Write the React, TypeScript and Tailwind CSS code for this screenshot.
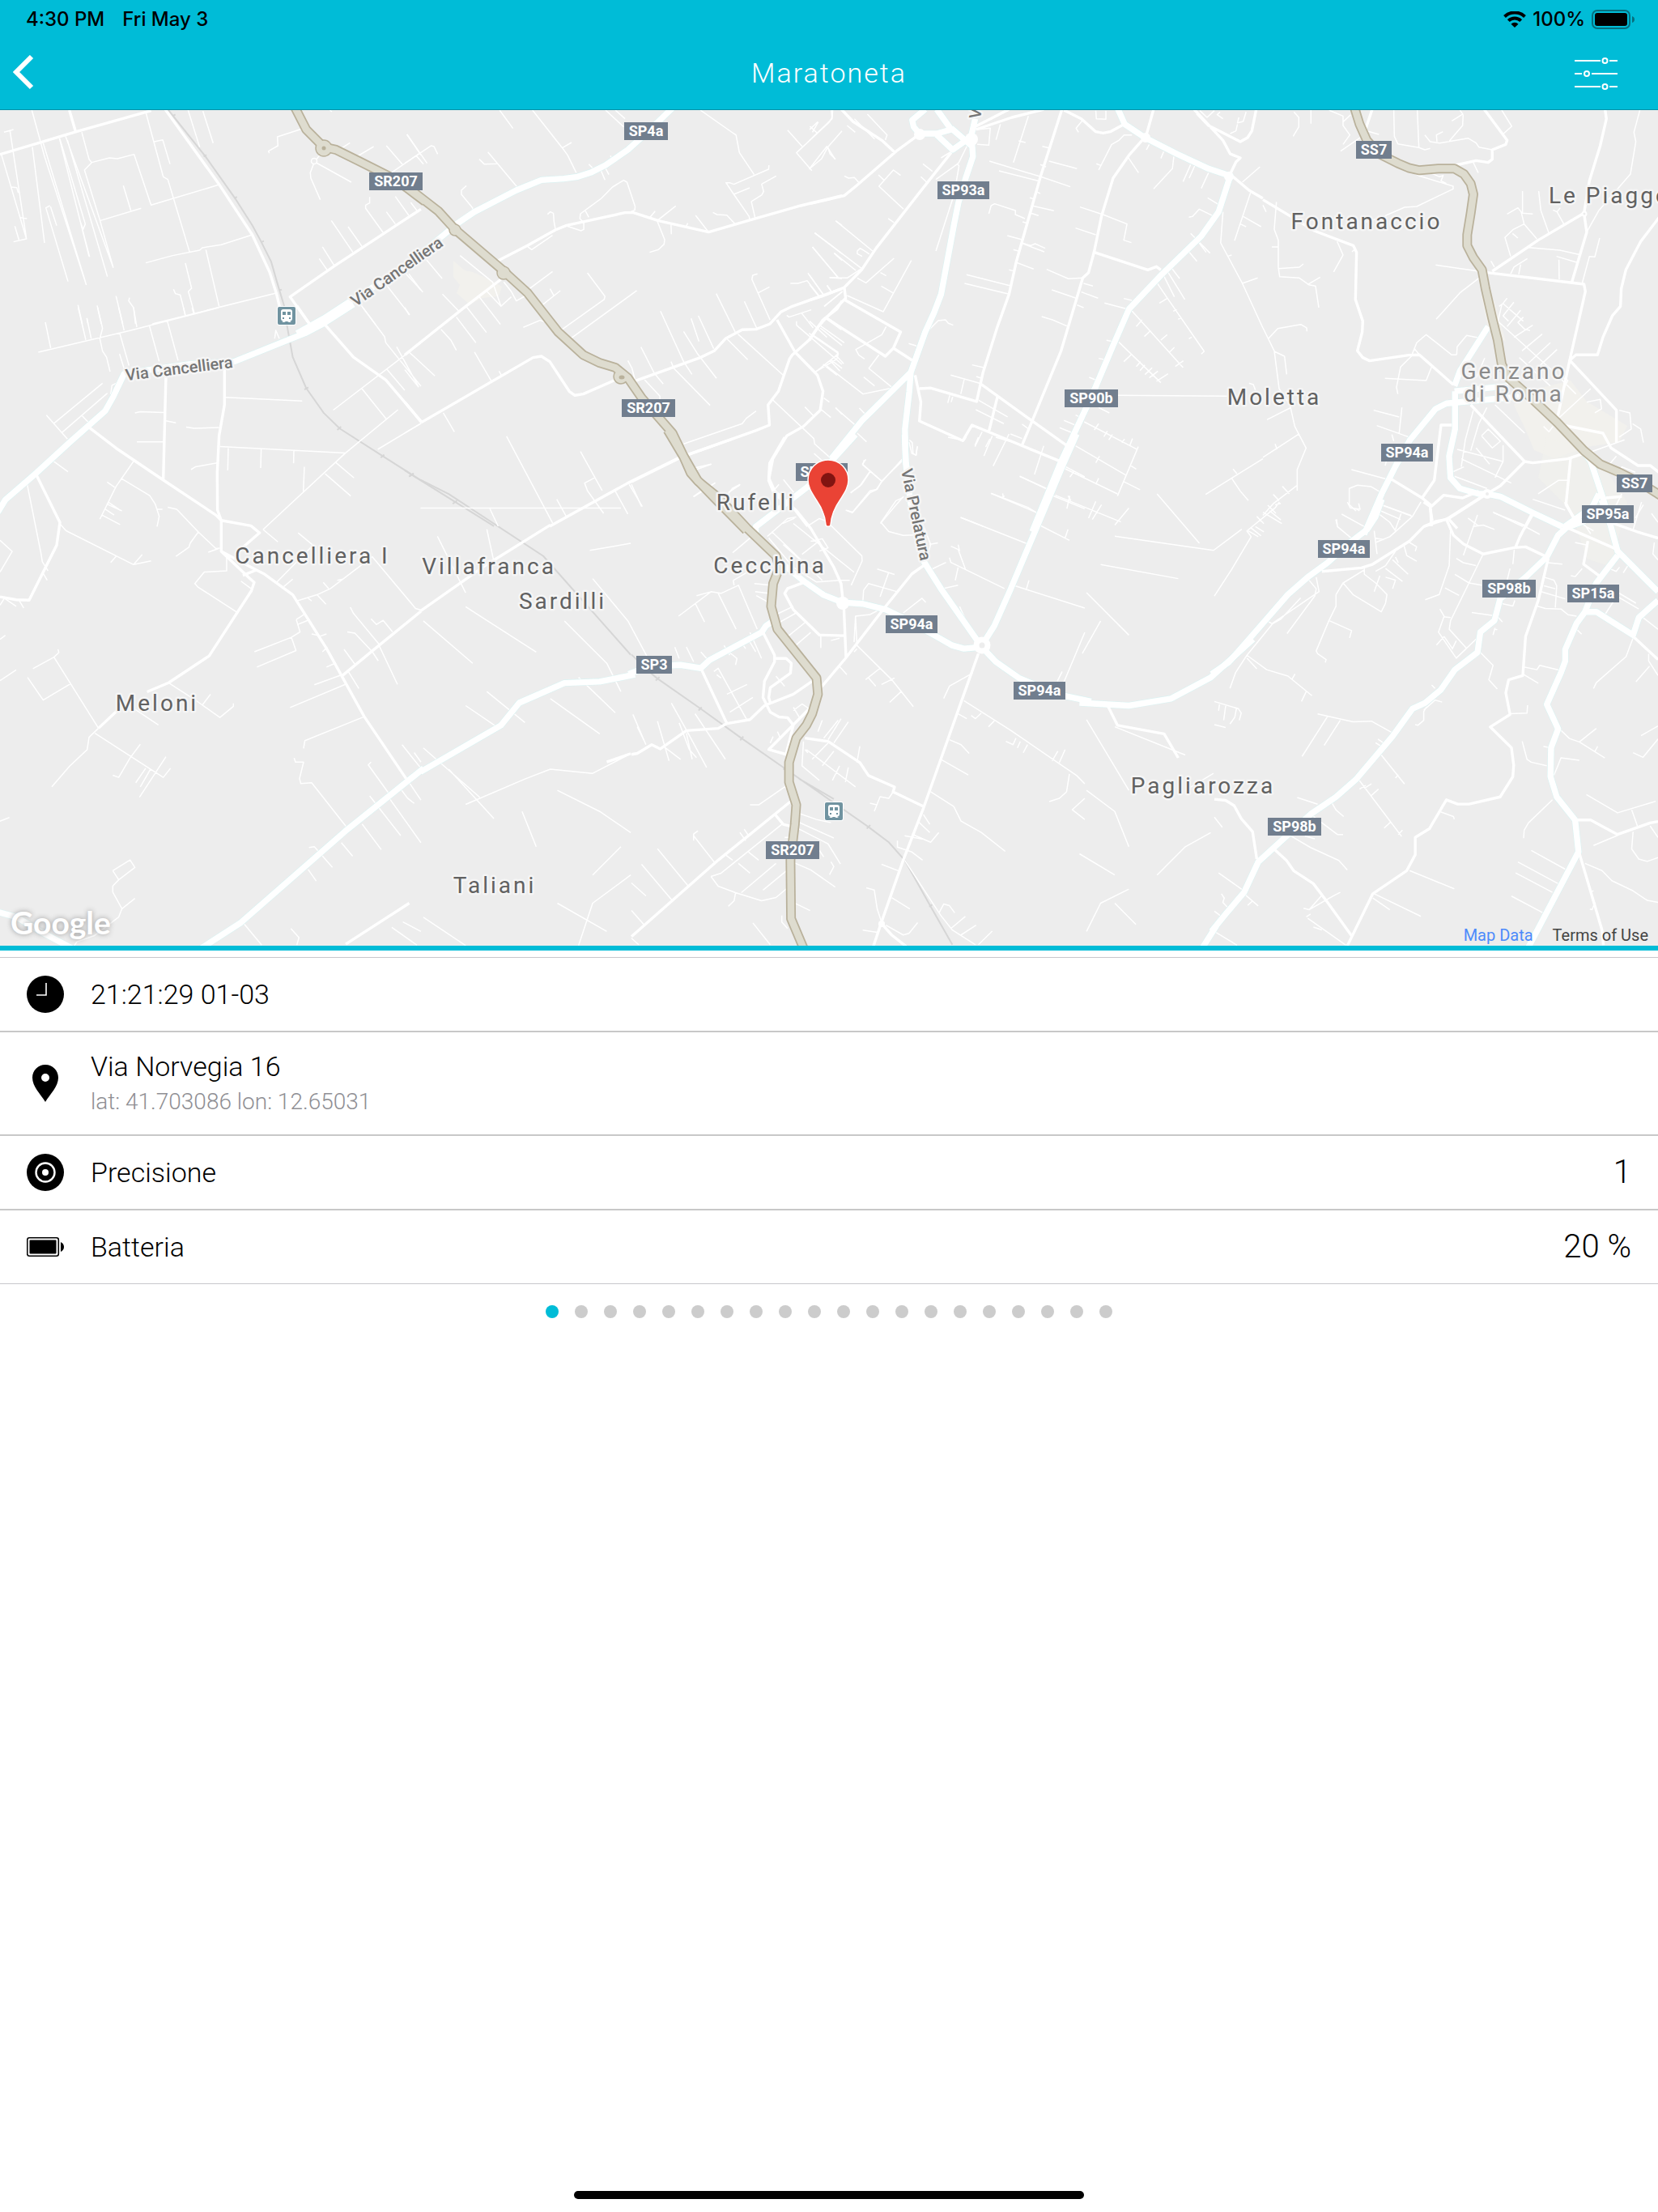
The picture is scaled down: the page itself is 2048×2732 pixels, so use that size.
import { ReactNode, useState } from "react";

type Tile = {
  // top left corner on the map and units per map pixel
  matrix: string;
  minor: string;
  local: string;
  main: string;
  highway?: string;
  rail?: string;
};

const tiles: Tile[] = [
  {
    matrix: "matrix(.3333 0 0 .3333 0 0)",
    minor:
      "M118 408L165 580 320 1056M15 490L50 480M37 485L98 885 50 896M5 572L98 885M40 693L62 695 68 715M76 806L100 810M55 838L70 888M120 545L165 900M220 512L330 950M243 505L420 992M160 530L320 1056M185 762L170 770 252 1043M187 765L210 836M297 820L308 850 316 830 222 515M306 852L332 952M250 520L398 1025M303 490L330 590 340 602 313 630 370 815 420 992M340 602L405 585 435 588 497 572 560 760 810 685M370 818L523 772M457 688L485 780M540 415L605 655 622 665 703 935M572 525L603 518 630 608M697 408L740 545M752 412L790 530M540 974L640 947 740 927 750 918 820 907 935 870M763 925L812 1135M565 1200L1020 1087M687 975L710 1068 698 1080 720 1160M643 1072L650 1088 668 1093 687 1168M480 1103L477 1115 495 1140 502 1200M430 1097L455 1200M360 1132L375 1200M289 1130L305 1200M322 1180L326 1200M1120 477L1028 507 1030 540 995 560 998 568M1187 740L1152 660 1150 640 1165 600 1185 575M1172 603L1302 675M1262 552L1297 529M1320 582L1385 543M1508 498L1560 575M1432 540L1492 610M1450 640L1560 565M1370 730L1370 752 1355 760 1355 772 1420 862M1465 728L1515 798M1522 750L1545 780M1432 785L1465 830M1290 840L1342 914M1228 817L1308 935M1195 915L1238 983M1183 958L1214 1003M1515 1015L1560 1075M1330 1120L1390 1200M1435 1060L1518 1166M1222 408L1230 414",
    local:
      "M0 572L150 528 285 487 560 410M257 408L280 487M612 405L810 680 935 870 1000 1010 1025 1090 1037 1140M1560 775L1240 985 1075 1100 1150 1205",
    main: "M1100 1235L1200 1180 1300 1115 1510 985",
    highway: "M1094 400L1135 480 1170 515 1200 545 1245 555 1330 597 1440 652 1500 690 1575 747",
    rail: "M622 405L760 578 870 733 935 835 965 890 1005 970 1025 1040 1055 1140M755 580L765 574M868 736L878 729M966 898L978 893M1035 1076L1044 1073M640 430L650 424",
  },
  {
    matrix: "matrix(.3444 0 0 .3333 500 130)",
    minor:
      "M340 18L388 86M458 18L565 158 598 138M565 158L584 185 615 250M720 18L785 80M755 18L790 50M1060 18L1180 105 1188 110 1200 175 1253 257M1180 293L1305 237 1306 222M1180 293L1165 287 1152 287 1180 330 1235 412 1237 425M1180 330L1237 306M1332 262L1280 292 1287 320 1280 333 1243 357 1257 420M1530 18L1532 45 1523 62 1405 176 1460 242M1373 92L1425 152M1453 78L1478 102M1462 100L1483 62M1568 95L1517 155 1495 198 1450 237M1517 155L1525 180 1545 200M8 108L80 215M0 215L95 150 105 153 118 181M40 185L67 218M298 173L403 303M267 200L285 218 330 217M243 390L243 380 203 330 203 315 221 298M660 218L690 250M703 240L718 277M718 230L732 257M738 187L745 210M540 458L535 430 533 400 522 395 512 404M580 447L632 465 642 460 642 435 628 420 630 402 705 345 745 303 785 278 797 285 826 375 825 388 810 395M648 392L660 415M440 523L455 535 530 482M880 415L898 392M905 428L972 373M905 428L932 498 930 515 910 535 878 545M955 443L956 478M1008 452L1015 437M1043 408L1088 468M1105 397L1120 405 1155 407 1185 440M1470 473L1568 550M1462 525L1555 640M1540 548L1568 575M1523 638L1568 642M1548 430L1568 445M1446 622L1500 700M1383 660L1410 660 1443 650 1487 708M1265 625L1248 630 1245 645 1310 795M1268 695L1308 673M1515 667L1530 690M1505 745L1568 690M1458 758L1378 785 1370 778M1423 770L1465 825M1117 698L1185 840M1218 727L1263 828M1195 848L1360 1003M1155 865L1230 943M1053 780L1108 902M1027 790L1055 875M1000 838L1048 918 1118 1012M917 763L1000 950 1030 997M955 950L965 975 1095 1112M847 896L895 993 927 1033M800 946L815 975 825 1015M860 1017L915 1078 915 1090M198 557L315 655 345 745 382 710M0 620L65 692M78 573L134 642M135 700L193 762M382 690L355 655M382 690L400 725 430 708M440 685L530 616M487 745L558 687M521 680L535 706M560 834L715 720 718 708 655 621M590 868L832 687M425 823L485 797 510 805 540 845M222 748L293 842M267 710L343 812M295 690L345 745M185 785L255 880M130 830L165 870 185 908M18 917L108 1003M0 980L50 1045M250 915L312 1025M338 985L347 1002M138 1140L178 1210M0 750L15 776M0 1215L60 1178M1000 1255L1210 1180 1225 1160 1260 1133M1320 1092L1467 1235 1470 1255 1530 1310M1468 1290L1500 1320M1435 1118L1470 1155M1503 1085L1523 1100M1493 1127L1528 1157M1545 1120L1568 1145M1405 815L1405 800M1405 815L1568 960M1450 845L1555 920 1550 940 1470 990M1490 825L1568 890M1530 945L1568 975M1500 960L1550 1000M1035 1450L1070 1425M1030 1345L1045 1350 1100 1330M1160 1440L1175 1420 1203 1405M1358 1387L1395 1435M1355 1550L1398 1530M1325 1425L1342 1405M365 1227L530 1548M545 1460L580 1525M630 1283L708 1428M682 1380L645 1400 655 1428 713 1512M755 1430L800 1515M805 1405L852 1487M305 1495L335 1560",
    local:
      "M330 578L440 520 540 462 580 445 790 398 820 398 910 428 1090 470 1240 425 1420 372 1568 335M345 645L215 748 0 925M60 1175L460 935 490 930 520 950 590 1060 610 1075 640 1070 755 1018M0 1100L60 1175M825 1022L1060 935 1110 910 1150 865 1210 832 1260 830 1310 810 1350 765 1390 745 1568 680M1335 795L1400 915 1480 1000 1500 1060 1490 1130 1430 1190 1370 1225 1320 1310 1305 1390 1325 1440 1400 1500 1445 1560M1568 725L1550 755 1500 795 1450 870 1390 925 1380 940 1340 1060 1303 1110 1308 1185 1260 1205 1010 1297M990 1303L800 1400 520 1560M1515 790L1568 830",
    main: "M-5 602L60 548 140 480 190 437 250 395 400 315 490 277 570 272 620 265 670 248 720 222 800 165 870 100 960 10",
    highway:
      "M-10 293L30 320 120 392 180 460 350 610 440 695 550 840 640 925 700 955 755 972 800 1010 850 1085 960 1215 1000 1300 1050 1390 1115 1460 1225 1575",
    rail: "M0 1353L320 1560M15 1376L32 1364M172 1477L187 1465",
  },
  {
    matrix: "matrix(.3571 0 0 .3333 1000 130)",
    minor:
      "M80 18L78 50 0 130M0 90L28 62M60 152L0 235M60 152L88 200M155 50L225 125M130 75L158 100M200 33L268 110 262 128M120 262L135 270 155 268 172 288M315 260L290 240 240 300 325 385M238 258L258 278M392 217L425 245M385 265L405 285M272 420L292 435M90 428L218 540M18 473L180 605M10 525L100 640M85 548L160 612M182 560L165 550 165 540 175 530 190 540 207 552M70 638L130 640 180 605M0 630L50 705M292 567L195 658 165 640M245 620L265 632M352 575L255 765 130 705M248 670L288 695M0 665L30 705M60 668L75 690M50 745L115 690M455 195L515 155M437 275L515 215 545 150M510 215L517 225 500 330 437 540M580 90L625 85 620 148 580 145M660 70L645 128M757 40L705 212M723 132L747 138M805 152L835 160M798 220L818 228M622 207L800 265 902 302M655 243L790 280M828 207L925 235M783 320L798 327M762 343L778 348M772 373L845 391M765 400L792 409M737 432L755 438M620 402L628 372 640 365 712 390 712 405 745 420M684 483L735 498M735 510L765 520 780 513 815 530M735 512L812 543M705 535L722 540M716 583L775 607M690 610L705 614M543 628L698 670M536 660L690 700M820 608L895 643 945 640M838 684L922 715M920 455L990 480M935 377L1015 405 1098 440 1087 500 1113 509M948 660L980 670M940 692L998 715M925 740L948 750M803 783L840 795 890 818M1020 733L1105 757M1087 716L1115 723M1115 110L1088 110 1070 130 1045 145 1000 240M992 217L1010 224M1100 190L1138 250M1175 145L1165 165M1225 172L1215 197M1260 190L1255 235 1190 310M1318 220L1292 283M1332 225L1313 270M1380 250L1355 308M1377 343L1415 368M1312 415L1325 412 1348 385 1400 412M1558 228L1497 285M1525 325L1470 502M1500 412L1562 450M1490 440L1510 450M1430 395L1422 510 1497 660 1568 825M1497 660L1550 640M1445 560L1460 555M1318 475L1385 548M1340 500L1372 545M1310 540L1340 578M1250 600L1280 642M1235 610L1298 720M1222 625L1262 710M1200 655L1238 715 1365 912 1355 922M1210 733L1238 715M1258 763L1270 757M1275 793L1285 787M1312 865L1322 859M1115 762L1292 972M1130 820L1150 795M1158 857L1180 835M1215 870L1237 850M1245 915L1262 897M1265 968L1293 947M1070 878L1215 1028M1027 871L1060 878M1000 938L1022 943M1087 950L1112 925M1130 968L1145 950M1143 983L1160 962M1160 998L1185 973M1175 1010L1205 985M1200 1023L1240 995M967 1008L990 1018M1067 1075L1445 1078M1000 1120L1037 1140M950 1173L1132 1275M985 1203L1000 1180M1018 1228L1030 1207M1035 1240L1048 1220M1080 1250L1090 1237M1108 1260L1117 1235M1137 1265L1065 1448M920 1262L1093 1370M990 1325L1003 1300M1110 1335L1130 1348M1087 1395L1143 1425M880 1345L1065 1440M900 1378L915 1357M990 1405L1000 1382M850 1445L1077 1544M890 1495L900 1447M965 1530L990 1468M978 1535L1010 1480M920 1148L945 1160M880 1168L930 1190M865 1195L912 1215M727 1375L830 1425M627 1438L670 1455 755 1490 798 1518M670 1453L668 1438M522 1527L600 1560M810 1262L778 1368M695 1218L735 1235M735 1182L758 1200M690 1218L680 1240 635 1337M632 1225L603 1300M597 1210L572 1265M585 1093L685 1155M575 1128L672 1180M488 1000L595 1032M535 1015L523 1070M562 962L603 972M577 1005L595 1012M495 1080L490 1100M485 1075L478 1103M415 830L445 798 470 795 480 808 497 815M343 883L370 892M265 820L250 850 185 890 160 905 170 925 190 940M240 925L205 975 285 1045M187 1007L225 1040M0 800L60 860M35 815L120 880M10 850L98 915 95 925 18 990M70 945L105 985M52 960L185 1070 285 1048M90 925L118 958M90 1122L160 1187M165 1215L197 1247M172 1122L190 1142M345 1240L355 1250 358 1290 368 1297 373 1263M320 1312L250 1395 230 1425 210 1435 148 1510 125 1500M195 1312L183 1330 250 1393M210 1357L180 1405 142 1437M325 1450L300 1480 245 1550M1568 1310L1370 1442M1460 1382L1490 1430 1518 1465M1465 1348L1478 1365M1520 1030L1535 1035 1542 1055M1485 45L1480 65 1500 60 1510 25M1455 105L1475 95 1480 70M1350 20L1375 45 1400 20M1420 25L1410 35 1430 50M990 20L992 50 1025 52 1025 20M930 100L922 85 945 55",
    local:
      "M0 365L120 335 160 300 300 170 370 115M110 15L150 60 250 130 295 175M490 175L390 310 230 530 180 610 120 675 50 705 0 722M120 675L125 715 60 785 30 820 0 870M120 720L315 840 290 900 262 930 60 790M290 900L355 945M873 15L800 260 715 580 690 700 650 820 600 990 578 1098 420 1048 380 1050M365 1000L385 1100 380 1170 530 1243 562 1185 720 1255 880 1325M595 1035L770 1170 895 1265M1150 130L1105 185 1050 270 1010 410 985 540 965 620 945 640 870 910 770 1170 735 1260M985 545L1170 610 1200 598 1215 610M1190 15L1165 110M880 18L940 50 990 98 1015 103 1040 98 1085 72M575 90L700 45 810 15M575 78L690 15M1330 15L1430 130 1455 180 1490 195 1475 210 1455 255M1340 30L1380 75 1490 135 1515 120 1530 95 1545 15M1465 265L1520 315 1568 345M650 1080L620 1210",
    main:
      "M573 50L560 110 565 190 540 270 515 360 500 440 455 700 430 770 400 840 350 990 180 1170 75 1310M350 990L345 1060 330 1200 332 1320 350 1410M1065 10L1090 70 1160 120 1270 180 1380 235 1455 262 1415 395 1355 485 1220 625 1105 755 1050 890 975 1080 870 1320 770 1580M400 15L355 55 360 80 380 105 440 105 490 90 440 15M490 85L560 150M440 110L495 165 570 108",
  },
  {
    matrix: "matrix(.3333 0 0 .3333 1560 130)",
    minor:
      "M245 18L297 40 297 75 322 110 297 145M325 35L297 62M115 25L133 45 133 80 112 115M178 18L178 68M288 170L360 120M485 18L487 115 500 143 578 157 600 165 620 160M572 18L578 157M742 32L700 58M742 35L740 75 697 125 690 135M730 18L742 35M600 110L620 135 655 140 760 122 790 140 800 155 850 165M645 135L643 110 667 98M885 18L922 78 892 105M1397 18L1375 100 1382 135 1362 255 1245 390 1200 470M780 213L798 250M480 208L580 262 705 300 705 310 570 375 525 378 440 415 375 435M620 250L655 265 668 260 660 280 680 290M385 95L430 108M962 318L962 400 1000 403M905 403L945 380 957 395 968 440 1015 495M968 440L928 460 897 490 918 560M925 475L945 492M1022 318L1030 390 1060 475M1075 388L1090 395 1102 380M1090 395L1115 440M845 577L858 600M980 568L930 600 918 625M955 590L948 627M1097 572L1098 645M985 527L1100 537 1170 553M1088 560L1165 583M1248 492L1230 562 1210 560 1183 660M640 592L800 615M805 637L730 695 642 793M865 795L1080 990 1160 1070M875 745L890 735 965 800M905 715L885 740 870 805M930 730L890 780 910 800M955 760L905 820M965 785L945 805 970 830 990 835M1000 815L930 860M1035 848L960 910M1065 880L985 955M1090 905L1010 980M950 935L1065 1040M275 505L297 555 262 618M330 543L345 530M50 358L42 460 57 500 57 600 62 635 135 640 170 665 195 670 207 750M57 605L135 600 150 588M165 665L212 637M33 525L57 525M0 370L12 395M0 825L42 910 60 1050 100 1110 118 1190 160 1270 127 1350 127 1428M20 865L55 827 140 812 162 825 163 838M42 912L80 930 88 997M15 1165L100 1122M135 1217L0 1305M45 1255L52 1275M72 1412L98 1440M38 1442L60 1465M125 1410L40 1475 0 1520M0 1508L70 1550M18 1482L48 1512M718 925L700 925 605 850 570 880 550 930 510 970 495 1045 500 1070M452 1012L605 1020 625 970M560 900L580 925M822 937L790 1010M718 925L720 895 755 853 800 862M410 1130L505 1155M515 1120L505 1215M422 1187L548 1232M478 1220L485 1245M460 1310L453 1335M328 1350L475 1390M345 1503L320 1480 320 1420 350 1408 400 1413 433 1432M345 1495L358 1503M438 1480L550 1520M430 1500L510 1535M270 1535L275 1555M780 1130L750 1240 735 1340M830 1120L800 1180 770 1280M860 1110L970 1215M810 1225L835 1200 880 1245 850 1270 810 1225M720 1275L890 1320M735 1310L860 1370 920 1400M790 1270L840 1330M890 1260L890 1320 860 1380M710 1375L830 1420M745 1340L700 1360M1215 1050L1090 1165M1200 1100L1250 1090 1255 1125 1230 1140M1100 1000L1130 1020 1110 1060M1040 1190L1060 1210 1075 1190M1320 1130L1360 1140 1365 1200 1320 1230M1370 1180L1400 1200 1410 1250M1200 1290L1340 1240M1285 1330L1310 1300M1310 1380L1330 1340 1380 1360M1330 1440L1300 1500M1410 1480L1380 1530M1130 1390L1095 1390 1020 1440M855 1510L980 1560M760 1530L800 1560M1000 1460L1120 1500",
    local:
      "M0 350L100 410 190 465 335 520 347 545 343 720 370 800 368 840 350 910 370 935 395 947 540 926 580 925 705 1035M820 15L905 130 900 145 850 165 850 200 835 212 790 205 700 225M1268 15L1273 50 1250 150 1210 280 1190 400 1020 500 850 615M830 620L1190 663 1195 690 1137 945 1310 1130 1310 1250M1190 400L1200 470 1145 655M1137 945L1160 925 1240 925 1260 860 1295 780 1325 745 1328 680 1345 610 1400 505 1480 400M1137 945L1090 1165M405 15L380 90M1110 1185L1260 1215 1290 1270 1390 1335 1435 1335 1480 1370M770 1110L970 1320 880 1410 830 1440 690 1530 600 1560M970 1320L1000 1325 1130 1310 1190 1290M475 1385L590 1455 620 1480 625 1560M700 1185L660 1185 635 1390 590 1455M1140 1310L1123 1480 1160 1540M620 1490L670 1445 740 1455 800 1430M690 1535L720 1568M1000 1515L970 1568M1270 1455L1330 1450",
    main:
      "M375 1590L440 1440 490 1340 545 1240 640 1125 680 1105 840 1090 950 1080M712 1060L712 1200 690 1300 695 1380 730 1420 800 1440 830 1440 880 1450 1000 1510 1110 1562M710 1060L910 1040M710 1040L730 985 835 820M1190 1285L1215 1320 1260 1455 1270 1490M1120 1560L1220 1490 1245 1440",
    highway:
      "M338 5L358 70 385 130 430 180 500 215 540 232 580 241 650 235 710 235 745 255 770 290 780 330 770 400 757 480 757 520 780 565 812 610 825 680 850 790 870 870 885 960 910 1010 1000 1090 1090 1175 1190 1280 1250 1330 1320 1360 1400 1400 1464 1440 1490 1455",
  },
  {
    matrix: "matrix(.3333 0 0 .5102 0 380)",
    minor:
      "M142 108L485 55 810 0M168 35L188 98M290 0L318 78M322 25L338 75M362 0L380 50 370 75 380 105 395 120 408 155M440 0L460 55M495 0L507 47M443 60L478 140M443 112L462 152M553 42L590 130M620 32L660 128M680 0L686 18M712 0L718 15M172 260L250 318M200 280L380 183M230 302L398 207M305 262L328 278M410 210L415 188 440 180M195 370L252 397M100 425L152 595 157 615 178 637M220 522L245 540 495 622 560 613M410 617L430 602M495 622L527 598M370 512L430 433 495 372M397 422L425 435M400 470L440 488M395 475L452 492M388 487L423 502M378 502L445 525M448 413L555 455 575 475 590 505 582 530M580 488L602 488M500 255L520 252 607 254M507 325L605 325M615 274L652 279M690 289L720 292 812 290M708 392L725 385 805 376M835 217L1120 226M815 336L1280 352M846 340L844 394M968 343L966 388M1089 347L1088 377M1128 385L1124 448M975 537L1280 352 1475 247M975 537L1030 567M1205 402L1300 456M1245 375L1312 412M1340 195L1432 270M1345 0L1425 70 1430 85 1560 190M1235 248L1520 105 1560 85M1400 343L1560 280M1470 95L1550 190M1435 150L1500 200M1500 0L1518 18M1018 75L1022 55 1035 75M622 483L655 488 735 543 800 583 815 582M735 543L705 570 700 580 652 602M772 592L810 583M840 605L840 637 757 640 722 668 735 677 878 737M893 662L930 680M1052 675L1085 657M1025 665L1115 605 1160 575 1105 545M1100 710L1175 695 1225 680 1380 603 1540 728 1560 732M1140 702L1155 710M1175 695L1208 718M1198 665L1218 680M1250 660L1272 657M1098 755L1128 742M1140 757L1103 767M1098 755L1112 785 1080 798 943 833M1080 798L1097 830 952 870M1155 790L1188 795 1210 790M1195 833L1213 822M1210 870L1245 860M1165 913L1262 890M1075 968L1280 912M1298 725L1310 740 1405 815M1375 753L1395 767 1420 757 1455 785M1287 785L1315 788 1380 833 1402 855M1275 827L1315 863M1405 818L1473 912M1290 880L1330 922M1350 990L1130 1048 1125 1067M1090 1090L1095 1100 1125 1100 1110 1140 1115 1152 1155 1150 1290 1262M1375 1100L1365 1107 1440 1175M1370 1182L1485 1278M1440 1185L1560 1295M1490 1058L1560 1115M1535 1077L1560 1100M1485 1165L1510 1187 1535 1200M1515 1148L1560 1192M1342 1250L1413 1312M1265 1295L1307 1328M1145 1307L1165 1305 1232 1355M1142 1360L1172 1388M0 563L45 590 0 640M15 703L60 723M0 720L15 705M70 708L88 727M160 643L175 660M0 903L60 877M0 803L20 793M122 874L200 846 218 835 215 827M200 846L365 1018M102 895L160 950 262 910M365 1018L330 1040 323 1070 258 1110 192 1160M352 1030L605 1137 632 1115M418 1132L440 1137 482 1090 520 1057M503 1150L540 1115M520 1160L557 1118M517 1185L615 1087M495 970L587 1010M625 908L735 955 815 992 865 965 865 958M750 962L780 936M0 1243L35 1234M418 1363L482 1337 500 1355 440 1385 418 1363M440 1385L418 1400 418 1415 452 1455 500 1430M452 1455L440 1475 350 1520 285 1535 275 1545M905 1492L970 1543M1078 1503L1108 1525 1100 1543M1452 1500L1545 1543M1493 1487L1560 1510",
    local:
      "M135 405L222 520 210 575 108 708 60 707 0 700M330 290L430 340 600 415 800 502 820 515M615 165L605 418M832 145L832 235 812 310 805 400 806 490 820 515 930 528 962 545 900 580M820 515L820 590 925 655 942 665 932 685 775 843 625 908 545 930M435 975L365 1018M820 590L950 635 980 645 1085 695 1210 825 1350 990 1505 1140M900 648L950 635M1270 890L1400 820 1560 735M1100 -5L1150 42M1200 38L1310 120 1430 175 1560 275",
    main:
      "M-8 495L20 465 135 400 260 325 390 250 420 215 460 160 560 150 700 137 870 130 1060 80 1130 62 1200 38 1310 -8M-8 1463L60 1475 150 1510 270 1552M700 1570L890 1490 1280 1267 1570 1115",
    rail: "M1060 30L1085 120 1135 195 1200 255 1260 293 1420 360 1560 418M1128 198L1143 193M1250 296L1264 288M1411 363L1424 356M1518 408L1531 402",
  },
  {
    matrix: "matrix(.3571 0 0 .4018 780 540)",
    minor:
      "M0 145L35 213M195 65L215 95 275 83M215 183L290 140M335 170L375 147M350 355L410 310M352 440L430 400M163 550L275 475 310 480 370 455 435 590M225 487L275 475M220 510L253 568M300 480L362 590M352 440L355 455M425 450L480 455M428 475L475 480M432 487L475 508M615 270L650 250 675 258 797 365 798 380 760 455M470 305L540 250 570 245M475 310L560 400 640 445 720 440M485 290L660 440M525 330L600 390M560 265L770 415M620 320L660 312 680 340 650 350M590 360L640 325M720 440L755 440M803 470L820 450 920 475M803 470L800 510M850 405L910 422M890 415L860 490M770 630L775 550 825 545 880 520M775 550L780 640M940 540L1005 495 1018 508M780 640L900 745 975 828M810 745L860 710M820 740L845 765M865 760L910 740M893 815L935 780M720 705L745 730M805 70L800 85 865 135 940 70M825 105L790 150 758 170M865 135L850 160 825 165 765 230 745 225M940 185L915 195 863 262 890 290 940 302 1000 300M1000 250L1035 330 1025 360M1030 330L1060 325M960 15L970 50 985 55 988 30M1040 405L1088 385M1080 465L1130 455M1135 520L1160 570M1100 370L1105 385 1290 465M1105 335L1130 345 1155 405M1130 330L1135 350M1120 440L1130 400M1140 247L1370 328M1245 173L1410 235M1285 185L1290 180M1343 120L1450 165M1400 265L1515 317M1500 310L1510 283M1430 170L1568 220M1510 180L1520 195M1320 455L1568 525M1365 470L1375 440M1490 85L1568 122M1260 0L1355 25M1188 25L1200 0M1095 0L1150 10 1158 0M1225 30L1240 5M1568 600L1478 790M1473 750L1490 720M1150 810L1310 900 1540 1040 1568 1065M1175 855L1190 865 1210 848M1235 890L1255 872M1295 935L1320 945 1330 925M1335 955L1345 935M1355 970L1370 945M1455 995L1475 965M1480 1000L1500 960M1515 1035L1505 1090 1480 1110 1445 1120M1568 1110L1525 1145 1568 1175M1180 725L1100 765 1080 803M1130 850L1160 865M1100 930L1140 945 1168 972M1070 990L1165 1038M1035 1090L1115 1135 1140 1180 1210 1215 1293 1273M1010 1160L1032 1190M990 1180L1032 1215M970 1220L1035 1245 1063 1215M945 1225L1005 1235M920 1240L920 1260 970 1275 1007 1300M865 1313L930 1335M812 1385L840 1392 850 1450 865 1490M800 1515L850 1522M900 1415L963 1450M880 1500L940 1530 960 1525 990 1492M945 1300L1070 1470 1110 1515 1190 1560M1065 1460L1080 1435 1100 1440 1118 1462M1105 1510L1155 1473M1140 1530L1192 1500M1200 1560L1248 1518M905 1090L890 1110 860 1105 840 1150M825 1125L848 1130M605 960L775 1075M595 935L590 1010 650 1055M600 960L610 970M625 990L680 940M660 1010L700 965M695 1055L720 1010M740 1060L750 1015M645 905L660 870M665 925L715 870M680 930L725 865M700 940L750 875M780 1000L790 950M575 1155L640 1175 690 1185M570 1180L700 1232M570 1200L680 1250 723 1312M555 1305L620 1330 705 1383M560 1430L618 1455M530 1230L560 1230M650 1270L665 1290M690 1305L700 1320 685 1345M410 1130L440 1130 530 1075 550 1090M215 1240L215 1220 230 1210M215 1225L290 1310M90 1265L195 1378M35 1313L140 1423M0 1370L50 1410M0 1455L45 1500M0 1540L25 1560M375 1215L395 1240M390 1205L405 1225M320 1280L350 1300M370 1310L410 1340M405 1275L440 1300M520 1190L310 1340 275 1350M275 1350L300 1380 360 1400 450 1425 500 1415 540 1385M380 1400L500 1310M360 1400L355 1425 335 1442M455 1392L540 1330M520 1470L520 1490 540 1510M420 1493L480 1560M5 852L50 945M90 873L130 995M138 817L190 900 260 1015M165 878L200 960 225 985M220 850L325 990M45 935L20 890M110 950L170 990M190 910L210 990M285 720L300 710 400 870M295 730L310 740M330 790L400 760M340 845L420 800M330 655L365 680 360 700M190 645L215 690M240 660L270 690M150 645L165 680M320 640L340 670M375 625L395 650M400 615L430 660M410 600L450 680M500 545L560 520M510 570L570 540M530 620L600 570M555 650L620 600M655 610L655 648M690 625L720 618M490 920L480 940M505 905L515 925M560 840L590 820 615 835M580 860L560 830M500 735L530 765M780 650L770 660",
    local:
      "M0 137L175 60M190 55L350 5M530 0L478 80 475 125 495 165 570 225 620 280 700 400 725 450 735 530 742 675M1010 395L970 420 870 530 740 680 650 775M1200 665L1150 790 1070 990 1010 1140 940 1300 865 1490 835 1570M865 1495L900 1530 950 1565M600 925L680 935 790 1000 820 1040 910 1075 905 1090 1010 1135M600 445L540 465 530 480 560 530 650 608 735 610M455 600L495 670 495 690 460 750 455 800 480 845 510 860 540 862 560 885 535 975 475 960 620 830M500 680L535 680 553 695 550 725 480 770 475 800 480 815M625 750L560 790 460 825 410 868 330 880 300 895 190 902 100 958 70 945 20 972 0 975M240 710L330 880M550 1120L300 1300 0 1535M495 1158L525 1190 555 1197",
    main:
      "M775 -8L690 75 620 145 540 200 430 275 430 300 480 345 530 395 600 445 665 485 730 508 800 512 880 530 950 560 1060 615 1110 640 1150 650 1212 645 1260 690 1340 740 1380 755 1470 790 1590 812M945 -8L950 90 965 200 1010 380 1070 465 1212 645M1540 -10L1490 90 1405 270 1310 470 1255 580 1212 640M-10 728L60 705 170 700 240 710 270 685 450 600 465 580 490 565",
    highway:
      "M125 -22L180 60 205 110 230 135 300 185 400 280 500 365 512 400 490 450 483 520 505 590 640 740 645 790 625 850 605 885 570 925 545 1000 545 1060 570 1130 565 1190 550 1300 552 1480 602 1585",
    rail: "M0 668L60 720 90 742 240 835 380 925 530 1018 820 1198 890 1245 945 1300 1030 1435 1110 1560M580 1050L700 1112M84 748L97 737M232 840L243 830M376 932L387 920M525 1022L535 1012M814 1203L826 1192M1030 1443L1040 1437",
  },
  {
    matrix: "matrix(.3495 0 0 .3571 1500 620)",
    minor:
      "M0 325L60 235 130 120 115 100 215 20 230 0M215 10L235 5M195 30L235 62M150 50L175 75M145 85L175 103M130 90L165 117M120 100L155 120M470 0L480 20 515 25 510 5M590 10L700 50M580 40L620 70 640 100M660 40L640 95M432 60L435 85 490 130M450 42L530 85M730 0L700 50 620 120 570 140M565 100L575 180M570 125L600 130M640 170L605 220 570 240M670 150L680 185 715 205M690 140L715 155 710 170M640 190L650 210M630 200L685 250M605 230L665 275M530 225L530 250 570 280 610 320 605 350 590 380 490 320 455 280 530 235M430 320L455 280M430 320L430 360 405 410 360 515 365 525 395 545 392 555M405 410L485 445 478 470M605 260L640 270 630 300M585 255L565 310M360 260L370 310 205 420M330 265L360 300 355 325 257 455M305 332L235 405 205 422 185 410M205 422L115 530 75 590 55 645M115 530L185 580 260 602 345 670M275 612L285 595M325 655L308 690M115 540L150 577M0 690L85 715 95 730 88 755M18 700L15 722M40 705L33 755M78 715L72 745 55 768M0 770L40 780M365 733L490 760 555 758 632 800M400 742L310 880M445 755L388 842M578 820L600 835M570 833L590 845M835 90L830 220 795 320 745 338M930 45L880 185M915 85L950 80 990 95M985 35L1090 85M1060 65L1150 112M855 195L880 210 925 220M950 180L835 410 830 440 890 505M850 250L900 280 945 288M815 297L865 323M797 370L812 395 792 450 855 540 935 465M810 397L835 400M785 495L812 465M812 465L840 505M855 480L840 510M910 382L1000 395 1018 415M990 440L1000 442M985 460L992 435M940 520L985 565 970 615 1000 647M750 708L740 725 740 755 720 772 710 770M740 720L780 685 805 692M768 633L780 645M590 875L672 975M640 955L650 943M510 960L662 1157M513 993L535 980M530 990L555 975M555 1015L580 993M600 1128L622 1108M650 1150L665 1135M293 1022L365 1045M415 1040L430 1065 457 1088M340 1080L435 1150 455 1150M270 1155L340 1195 440 1240 470 1273M320 1155L355 1165M15 1283L105 1345M105 1355L155 1397M118 1395L135 1380M25 1355L35 1370 30 1385 45 1400M0 1415L20 1430M0 1485L80 1533M0 1090L28 1125M445 1350L425 1360 335 1410 315 1405M380 1360L335 1410M325 1435L340 1425M330 1440L465 1533M350 1470L380 1480M565 1355L730 1433M560 1370L620 1410M690 1275L848 1338M800 1072L845 1088 848 1097M1090 570L1140 580 1150 565 1220 582M1090 595L1145 627M1140 360L1170 368 1225 370 1250 390 1280 395M1165 260L1200 270 1210 290 1205 365M1155 310L1240 335M1165 290L1205 300M1180 210L1230 215M1060 165L1055 215M1045 230L1035 270M1010 350L1055 360 1062 340M1280 440L1298 457M1045 732L1105 730 1107 703M1088 828L1105 890 1120 900 1175 912M1200 945L1215 910 1225 885 1290 893M1163 845L1185 850M1220 785L1255 818 1290 830 1380 885M1290 830L1350 783M1345 862L1355 845M1195 1030L1110 1110 1095 1135 1093 1163M1120 1205L1240 1270M1073 1245L1215 1320M1065 1283L1195 1350M1050 1363L1160 1420M1315 1012L1425 1075 1560 1035M1475 1065L1495 1120M1480 1140L1475 1200 1500 1235 1530 1243 1568 1230M1540 1120L1568 1160M1340 1188L1425 1153M1310 1250L1370 1275 1405 1310 1480 1345 1530 1378 1568 1385M1340 1345L1330 1348M1345 1385L1335 1410 1327 1408M1480 470L1455 535 1350 625 1340 645M1535 525L1535 550 1568 600M1538 568L1490 622M1515 400L1568 440M1568 775L1508 808M1568 820L1515 883 1480 867M1380 390L1430 315 1490 350M1430 330L1500 370M1445 245L1465 215M1385 225L1420 240 1432 225M1260 255L1275 258 1300 230M1275 140L1320 150M1545 40L1568 70M1555 140L1550 180 1568 200M1510 0L1480 95M1310 80L1330 110M1270 60L1340 100",
    local:
      "M380 240L520 228 560 215 690 135 740 85 780 68 820 60 940 -15M770 65L762 15 740 0M820 60L845 115 880 145 950 180 1060 158 1100 155 1175 190M1065 155L1080 120 1120 45M1030 -5L1245 88 1425 165M1180 195L1145 340 1100 465 1090 600 1040 615 1030 660 1045 735 975 778 1050 850 1058 910 1055 950 1010 1020 900 1045 860 1045 820 1030 760 1130 710 1160 710 1220 680 1275 560 1355 470 1535M0 1028L40 1032 70 1050 95 1095 135 1140 150 1235M205 1195L255 1240 280 1275 350 1320 400 1385 485 1500M1290 1215L1370 1480 1375 1533M1280 1100L1330 1100 1425 1150 1540 1110 1568 1105M1480 465L1568 545M1370 60L1500 105 1568 125M1320 135L1305 215 1360 255M1240 0L1275 65",
    main:
      "M-10 595L50 555 100 500 180 410 260 320 330 260 400 210 480 140 540 95 570 50 592 -10M1310 65L1245 88 1215 115 1175 190 1100 260 1010 335 990 410 940 450 930 520 850 580 800 650 745 695 700 715 630 810 500 960 430 1020 340 1080 250 1160 155 1245 105 1350 40 1425 -10 1485M1368 -8L1400 80 1425 170 1568 310M1425 185L1350 280 1310 380 1280 420 1240 510 1240 550 1225 590 1175 700 1215 785 1190 850 1188 950 1210 1020 1275 1100 1287 1210 1110 1540M1310 380L1350 380 1480 460 1500 400 1568 340",
  },
  {
    matrix: "matrix(1.743 0 0 1.743 0 0)",
    minor:
      "M298 360L440 360M310 380L330 420M345 375L350 398M330 500L352 515M345 490L372 512M300 530L340 565M318 545L350 580M420 410L445 440 460 468M400 440L430 470M390 495L425 520M410 480L436 505M430 470L440 490M395 560L425 575 447 590M370 575L380 600M300 440L335 470M330 430L380 462M447 534L420 548 390 545 372 552 330 570M447 620L420 640 410 670M440 600L420 620M395 640L430 660M300 650L330 670M418 390L447 385M765 605L790 620M770 510L800 560M790 515L840 535M860 548L840 560M790 640L805 655M770 420L800 450M780 400L835 410M790 380L860 390 880 375M820 350L850 385M800 360L790 372M767 463L780 440M820 620L840 600 858 590M770 660L780 640 800 630M770 560L790 575 800 600",
    local:
      "M390 372L345 400 298 433M447 534L430 540M785 500L792 514 825 520 835 537M245 669L290 640",
    main:
      "M298 547L355 514 368 498 400 484 425 483 450 478M765 498L800 500 830 495 858 480 888 453M862 656L850 675",
    rail: "M298 340L318 350 385 394 447 464",
  },
];

// halo keeps the names readable where they cross a road
const places = [
  { name: "Fontanaccio", x: 1688, y: 283 },
  { name: "Moletta", x: 1574, y: 500 },
  { name: "Rufelli", x: 934, y: 630 },
  { name: "Cecchina", x: 951, y: 708 },
  { name: "Cancelliera I", x: 386, y: 696 },
  { name: "Villafranca", x: 604, y: 709 },
  { name: "Sardilli", x: 695, y: 752 },
  { name: "Meloni", x: 194, y: 878 },
  { name: "Taliani", x: 611, y: 1103 },
  { name: "Pagliarozza", x: 1486, y: 980 },
];

const shields = [
  { code: "SP4a", x: 798, y: 162, w: 54 },
  { code: "SR207", x: 489, y: 224, w: 66 },
  { code: "SR207", x: 801, y: 504, w: 66 },
  { code: "SP93a", x: 1190, y: 235, w: 64 },
  { code: "SS7", x: 1697, y: 185, w: 44 },
  { code: "SP90b", x: 1348, y: 492, w: 66 },
  { code: "SP94a", x: 1738, y: 559, w: 64 },
  { code: "SS7", x: 2019, y: 597, w: 44 },
  { code: "SP95a", x: 1986, y: 635, w: 64 },
  { code: "SP94a", x: 1660, y: 678, w: 64 },
  { code: "SP98b", x: 1864, y: 727, w: 66 },
  { code: "SP15a", x: 1968, y: 733, w: 64 },
  { code: "SP98b", x: 1599, y: 1021, w: 66 },
  { code: "SP94a", x: 1126, y: 771, w: 64 },
  { code: "SP94a", x: 1284, y: 853, w: 64 },
  { code: "SP3", x: 808, y: 821, w: 44 },
  { code: "SR207", x: 979, y: 1050, w: 66 },
  { code: "SP94a", x: 1015, y: 583, w: 64 },
];

const streets = [
  { name: "Via Cancelliera", transform: "translate(222 462) rotate(-7)" },
  { name: "Via Cancelliera", transform: "translate(494 341) rotate(-35)" },
  { name: "Via Prelatura", transform: "translate(1125 637) rotate(78)" },
  { name: "V", transform: "translate(1212 141) rotate(-82)" },
];

type Layer = "minor" | "local" | "main" | "highway" | "rail";

function Roads({ layer, color, width }: { layer: Layer; color: string; width: number }) {
  return (
    <g fill="none" stroke={color} strokeWidth={width} strokeLinejoin="round">
      {tiles.map((tile) =>
        tile[layer] ? (
          <path
            key={tile.matrix}
            d={tile[layer]}
            transform={tile.matrix}
            vectorEffect="non-scaling-stroke"
          />
        ) : null,
      )}
    </g>
  );
}

function Station({ x, y }: { x: number; y: number }) {
  return (
    <g transform={`translate(${x} ${y})`}>
      <rect x="-12" y="-12" width="24" height="24" rx="3" fill="#fff" />
      <rect x="-11" y="-11" width="22" height="22" rx="2" fill="#7093a0" />
      <path
        fill="#fff"
        fillRule="evenodd"
        d="M-4-8H4Q7-8 7-5V4Q7 6 4 7L6 8H3L1 7H-1L-3 8H-6L-4 7Q-7 6-7 4V-5Q-7-8-4-8ZM-5-5V-1H-1V-5ZM1-5V-1H5V-5ZM-5 2V4H-3V2ZM3 2V4H5V2Z"
      />
    </g>
  );
}

function MapView() {
  return (
    <section className="relative w-full border-b-[6px] border-[#00bcd7] bg-[#ededed] font-['Roboto',sans-serif]">
      <svg viewBox="0 136 2048 1032" className="block w-full" role="img">
        {/* Built-up areas */}
        <g fill="#f2f1ed">
          <path d="M560 322l14 12 10 2 18 8 18 10-4 12-20 2-16 8-16-14 4-10-8-10zM1830 366l16 6 14 50-22-16zM1870 500l30-20 40-10 20 26 50 30-10 20-40 6-40 14-25-10-10-24z" />
          <path d="M1910 540l60 20 40 60-20 80-30-10-20-60-40-40z" opacity=".6" />
        </g>

        <Roads layer="rail" color="#d6d6d6" width={2} />
        <Roads layer="minor" color="#fff" width={1.5} />
        <Roads layer="main" color="#d9f3f3" width={8.5} />
        <Roads layer="local" color="#fff" width={3.4} />
        <Roads layer="main" color="#fff" width={7.4} />
        <Roads layer="highway" color="#b9b19b" width={12} />
        <g fill="#dedccf" stroke="#b9b19b" strokeWidth="1.5">
          <circle cx="400" cy="183" r="10" />
          <circle cx="562" cy="284" r="7" />
          <circle cx="622" cy="337" r="8" />
          <circle cx="767" cy="465" r="9" />
        </g>
        <Roads layer="highway" color="#dedccf" width={8.5} />
        <circle cx="400" cy="183" r="9" fill="#dedccf" />
        <circle cx="400" cy="183" r="2.5" fill="#b9b19b" />
        <ellipse cx="768" cy="466" rx="3.5" ry="2.5" fill="#b9b19b" />

        {/* Roundabouts */}
        <g fill="#ededed" stroke="#fff">
          <circle cx="1213" cy="797" r="7" strokeWidth="7" />
          <circle cx="1837" cy="610" r="4" strokeWidth="4" />
          <circle cx="1957" cy="264" r="2.5" strokeWidth="2" />
          <circle cx="388" cy="199" r="3.5" strokeWidth="1.5" />
        </g>
        <g fill="#fff">
          <circle cx="1041" cy="745" r="8" />
          <circle cx="1136" cy="166" r="7" />
          <circle cx="1200" cy="172" r="8" />
          <circle cx="1415" cy="170" r="6" />
          <circle cx="1518" cy="218" r="6" />
          <circle cx="1089" cy="1141" r="4" />
        </g>

        <Station x={354} y={390} />
        <Station x={1030} y={1002} />

        <g
          fill="#757575"
          stroke="#f5f5f5"
          strokeWidth="5"
          strokeLinejoin="round"
          paintOrder="stroke"
          fontSize="20"
          fontWeight="500"
          textAnchor="middle"
        >
          {streets.map((street) => (
            <text key={street.transform} transform={street.transform}>
              {street.name}
            </text>
          ))}
        </g>

        <g fontSize="18" fontWeight="700" textAnchor="middle">
          {shields.map((shield) => (
            <g key={`${shield.x}-${shield.y}`}>
              <rect
                x={shield.x - shield.w / 2}
                y={shield.y - 11}
                width={shield.w}
                height="22"
                fill="#717e8e"
              />
              <text x={shield.x} y={shield.y + 6} fill="#fff">
                {shield.code}
              </text>
            </g>
          ))}
        </g>

        <g
          fill="#616161"
          stroke="#f5f5f5"
          strokeWidth="5"
          strokeLinejoin="round"
          paintOrder="stroke"
          fontSize="28"
          letterSpacing="3"
          textAnchor="middle"
        >
          {places.map((place) => (
            <text key={place.name} x={place.x} y={place.y}>
              {place.name}
            </text>
          ))}
          <text x="1913" y="251" textAnchor="start">
            Le Piagge
          </text>
          <g fill="#8a8a8a">
            <text x="1870" y="468">
              Genzano
            </text>
            <text x="1870" y="496">
              di Roma
            </text>
          </g>
        </g>

        {/* Marker */}
        <path
          d="M1023 568c-14 0-25 11-25 25 0 9 5 16 10 24 7 10 11 19 12 31 0 3 6 3 6 0 1-12 5-21 12-31 5-8 10-15 10-24 0-14-11-25-25-25z"
          fill="#ea4335"
          stroke="#fff"
          strokeWidth="1.5"
        />
        <circle cx="1023" cy="593" r="9" fill="#811411" />
      </svg>

      <span className="absolute bottom-1 left-[13px] font-['Lato',sans-serif] text-[39px] leading-[50px] font-bold text-white [text-shadow:0_0_6px_#999]">
        Google
      </span>
      <nav className="absolute right-3 bottom-px flex gap-6 text-[20px] leading-6">
        <a href="#map-data" className="text-[#4d8bfb]">
          Map Data
        </a>
        <a href="#terms" className="text-[#444]">
          Terms of Use
        </a>
      </nav>
    </section>
  );
}

function StatusBar() {
  return (
    <div className="flex h-12 items-center justify-between px-8 font-['Inter',sans-serif] text-[24px] leading-7 font-medium text-black">
      <div className="flex gap-[22px]">
        <span>4:30 PM</span>
        <span>Fri May 3</span>
      </div>
      <div className="-mr-1 flex items-center gap-2">
        <svg viewBox="0 0 28 20" className="h-5 w-7" fill="none" stroke="#000">
          <path d="M1.5 6.500a18 18 0 0 1 25 0" strokeWidth="4" />
          <path d="M6.300 11.600a11 11 0 0 1 15.400 0" strokeWidth="4" />
          <path d="M9.500 15.700a6.400 6.400 0 0 1 9 0L14 20z" fill="#000" stroke="none" />
        </svg>
        <span>100%</span>
        <svg viewBox="0 0 54 24" className="h-6 w-[54px]">
          <rect x="1" y="1" width="46" height="22" rx="6" fill="none" stroke="#066f7e" strokeWidth="2" />
          <rect x="4" y="4" width="40" height="16" rx="3" />
          <path d="M50 8q3 1 3 4t-3 4z" fill="#066f7e" />
        </svg>
      </div>
    </div>
  );
}

function NavBar() {
  return (
    <div className="flex h-[87px] items-start justify-between px-4 pt-5">
      <button type="button" aria-label="Indietro" className="w-[88px]">
        <svg viewBox="0 0 26 44" className="h-11 w-[26px]" fill="none" stroke="#fff" strokeWidth="6">
          <path d="M23 2L4 21 23 40" />
        </svg>
      </button>
      <h1 className="text-[34px] leading-[44px] font-light tracking-[2px] text-white">Maratoneta</h1>
      <button type="button" aria-label="Filtri" className="w-[88px]">
        <svg viewBox="0 0 56 44" className="h-11 w-14" fill="none" stroke="#fff" strokeWidth="2">
          <path d="M1 7H33M44 7H54M1 23H10M22 23H54M1 39H33M44 39H54" />
          <circle cx="38.500" cy="7" r="3" />
          <circle cx="16" cy="23" r="3" />
          <circle cx="38.500" cy="39" r="3" />
        </svg>
      </button>
    </div>
  );
}

function ClockIcon() {
  return (
    <svg viewBox="0 0 46 46" className="size-[46px]">
      <circle cx="23" cy="23" r="23" />
      <path d="M24 9V24H12" fill="none" stroke="#fff" strokeWidth="1.600" />
    </svg>
  );
}

function PinIcon() {
  return (
    <svg viewBox="0 0 46 46" className="size-[46px]">
      <path
        fillRule="evenodd"
        d="M23 0C14 0 7 7 7 16c0 11 10 20 16 30 6-10 16-19 16-30C39 7 32 0 23 0zm0 11a5 5 0 1 1 0 10 5 5 0 0 1 0-10z"
      />
    </svg>
  );
}

function TargetIcon() {
  return (
    <svg viewBox="0 0 46 46" className="size-[46px]">
      <circle cx="23" cy="23" r="23" />
      <circle cx="23" cy="23" r="11.500" fill="none" stroke="#fff" strokeWidth="2.400" />
      <circle cx="23" cy="23" r="4" fill="#fff" />
    </svg>
  );
}

function BatteryIcon() {
  return (
    <svg viewBox="0 0 46 46" className="size-[46px]">
      <rect x=".7" y="11.700" width="38.600" height="22.600" rx="2.500" fill="none" stroke="#000" strokeWidth="1.600" />
      <rect x="3.500" y="14.500" width="33" height="17" rx="1" />
      <path d="M42 17q4 2 4 6t-4 6z" />
    </svg>
  );
}

type RowProps = {
  icon: ReactNode;
  title: string;
  detail?: string;
  value?: string;
};

const rows: RowProps[] = [
  { icon: <ClockIcon />, title: "21:21:29 01-03" },
  { icon: <PinIcon />, title: "Via Norvegia 16", detail: "lat: 41.703086 lon: 12.65031" },
  { icon: <TargetIcon />, title: "Precisione", value: "1" },
  { icon: <BatteryIcon />, title: "Batteria", value: "20 %" },
];

function Row({ icon, title, detail, value }: RowProps) {
  return (
    <li className="flex items-center px-[33px] py-[22px]">
      {icon}
      <div className="ml-[33px] flex-1">
        <p className="text-[34px] leading-10 font-light">{title}</p>
        {detail && <p className="mt-1.5 text-[28px] leading-9 font-light text-[#8f8f94]">{detail}</p>}
      </div>
      {value && <span className="text-[40px] leading-[46px] font-light">{value}</span>}
    </li>
  );
}

export default function App() {
  const [page, setPage] = useState(0);

  return (
    <div className="flex min-h-screen flex-col bg-white font-['Roboto',sans-serif] text-black">
      <header className="border-b border-[#0391a6] bg-[#00bcd7]">
        <StatusBar />
        <NavBar />
      </header>

      <MapView />

      <ul className="mt-2 divide-y-2 divide-[#c8c8c8] border-y border-[#c8c7cc]">
        {rows.map((row) => (
          <Row key={row.title} {...row} />
        ))}
      </ul>

      {/* Page dots */}
      <div className="mt-[26px] flex justify-center gap-5">
        {Array.from({ length: 20 }, (_, i) => (
          <button
            key={i}
            type="button"
            aria-label={`Pagina ${i + 1}`}
            onClick={() => setPage(i)}
            className={`size-4 rounded-full ${i === page ? "bg-[#00bcd7]" : "bg-[#ccc]"}`}
          />
        ))}
      </div>

      <div className="mx-auto mt-auto mb-4 h-[10px] w-[630px] rounded-full bg-black" />
    </div>
  );
}
